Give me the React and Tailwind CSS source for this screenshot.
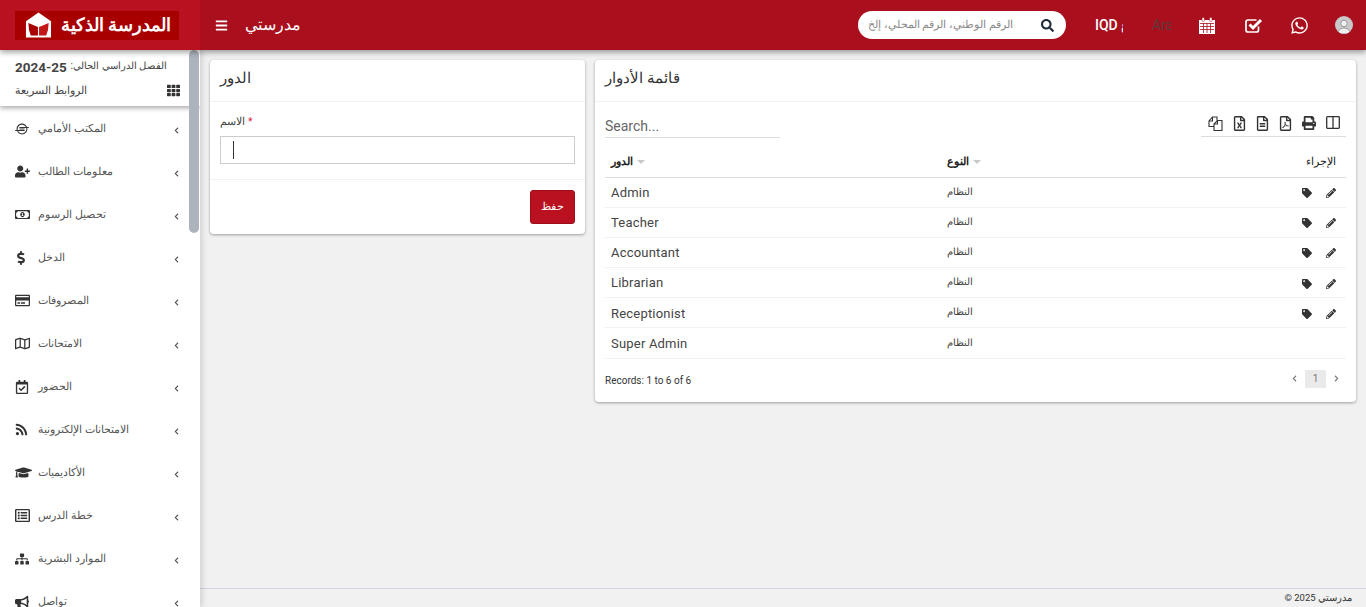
import React from 'react';
import {
  FaBars, FaSearch, FaWhatsapp, FaTh, FaChevronLeft, FaChevronRight,
  FaIoxhost, FaUserPlus, FaRegMoneyBillAlt, FaDollarSign, FaRegCreditCard, FaRegMap, FaRegCalendarCheck,
  FaRss, FaGraduationCap, FaRegListAlt, FaSitemap, FaBullhorn, FaTag, FaPencilAlt,
  FaRegFileExcel, FaRegFileAlt, FaRegFilePdf, FaPrint,
} from 'react-icons/fa';

const menu = [
  ['المكتب الأمامي', FaIoxhost, 'text-[14px]'],
  ['معلومات الطالب', FaUserPlus, 'text-[15px]'],
  ['تحصيل الرسوم', FaRegMoneyBillAlt, 'text-[15px]'],
  ['الدخل', FaDollarSign, 'text-[14px] -ml-[1px]'],
  ['المصروفات', FaRegCreditCard, 'text-[15px]'],
  ['الامتحانات', FaRegMap, 'text-[15px]'],
  ['الحضور', FaRegCalendarCheck, 'text-[14px]'],
  ['الامتحانات الإلكترونية', FaRss, 'text-[13px]'],
  ['الأكاديميات', FaGraduationCap, 'text-[17px]'],
  ['خطة الدرس', FaRegListAlt, 'text-[15px]'],
  ['الموارد البشرية', FaSitemap, 'text-[14px]'],
  ['تواصل', FaBullhorn, 'text-[14px]'],
];

const roles = [
  ['Admin', true],
  ['Teacher', true],
  ['Accountant', true],
  ['Librarian', true],
  ['Receptionist', true],
  ['Super Admin', false],
];

const SortCaret = () => (
  <span className="inline-block w-0 h-0 border-x-[4px] border-x-transparent border-t-[4px] border-t-[#c9c9c9] ml-1 align-middle" />
);

const Logo = () => (
  <svg width="27" height="28" viewBox="0 0 28 28" className="shrink-0">
    <path d="M14 1 L27 10 V27 H1 V10 Z" fill="#fff" />
    <path d="M3.5 12 L13.4 16 V25 L6 25 Q3.5 19 3.5 12 Z" fill="#a80000" />
    <path d="M24.5 12 L14.6 16 V25 L22 25 Q24.5 19 24.5 12 Z" fill="#c21818" />
  </svg>
);

const CalendarIcon = () => (
  <svg width="16" height="17" viewBox="0 0 16 17" className="shrink-0">
    <path d="M0 3h16v14H0z" fill="#fff" />
    <rect x="3" y="0.5" width="2.4" height="4" rx="1" fill="#fff" stroke="#a90f1c" strokeWidth="0.5" />
    <rect x="10.6" y="0.5" width="2.4" height="4" rx="1" fill="#fff" stroke="#a90f1c" strokeWidth="0.5" />
    <path d="M1 6.5h14M1 9.5h14M1 12.5h14M4.5 6v10M8 6v10M11.5 6v10" stroke="#a90f1c" strokeWidth="0.8" />
  </svg>
);

const CheckIcon = () => (
  <svg width="18" height="15" viewBox="0 0 18 15" className="shrink-0">
    <path d="M13.5 8.5V12a2 2 0 0 1-2 2H3a2 2 0 0 1-2-2V4a2 2 0 0 1 2-2h8.5" fill="none" stroke="#fff" strokeWidth="1.7" />
    <path d="M4.5 6.5L8 10L16 2" fill="none" stroke="#fff" strokeWidth="3" />
  </svg>
);

const CopyIcon = () => (
  <svg width="15" height="15" viewBox="0 0 15 15" className="shrink-0" fill="none" stroke="#333" strokeWidth="1.1">
    <path d="M6 10.5H1V5l3.5-4H9v3.5" fill="#fff" />
    <path d="M1 5h3.5V1" />
    <path d="M6 14.5V8l3.5-3.5H14v10z" fill="#fff" />
    <path d="M6 8h3.5V4.5" />
  </svg>
);

const ColumnsIcon = () => (
  <svg width="14" height="13" viewBox="0 0 14 13" className="shrink-0" fill="none" stroke="#333" strokeWidth="1.3">
    <rect x="0.7" y="0.7" width="12.6" height="11.6" rx="0.8" />
    <path d="M7 1v11" />
  </svg>
);

const Avatar = () => (
  <div className="w-[18px] h-[18px] rounded-full bg-[#c9c9c9] overflow-hidden flex items-end justify-center">
    <svg width="14" height="16" viewBox="0 0 14 16">
      <circle cx="7" cy="5.5" r="3.2" fill="#f1f1f1" stroke="#8a8a8a" strokeWidth="0.8" />
      <path d="M1 16 Q1 10 7 10 Q13 10 13 16 Z" fill="#f1f1f1" stroke="#8a8a8a" strokeWidth="0.8" />
    </svg>
  </div>
);

const Header = () => (
  <header className="h-[50px] flex bg-[#a90f1c] shadow-[0_2px_6px_rgba(0,0,0,0.4)] relative z-20 shrink-0">
    <div className="w-[200px] bg-[#b91120] flex items-center pl-[15px]">
      <div className="w-[164px] h-[29px] bg-[#a80000] flex items-center justify-between pl-[10px] pr-2">
        <Logo />
        <span dir="rtl" className="text-white font-bold text-[17.5px] whitespace-nowrap">المدرسة الذكية</span>
      </div>
    </div>
    <div className="flex-1 flex items-center pl-[15px]">
      <FaBars className="text-white text-[13px]" />
      <span dir="rtl" className="text-white text-[16px] font-medium ml-[17px]">مدرستي</span>
      <div className="ml-auto w-[208px] h-[28px] bg-white rounded-full flex items-center pl-[10px]">
        <div className="w-[148px] overflow-hidden text-[11px] text-[#8a8a8a] whitespace-nowrap">
          <span dir="rtl" className="inline-block">بحث باسم الطالب، رقم التلفون، الرقم الوطني، الرقم المحلي، إلخ</span>
        </div>
        <FaSearch className="text-[#1f2937] text-[13px] ml-[25px]" />
      </div>
      <div className="w-[28px] ml-[29px] overflow-hidden whitespace-nowrap text-white text-[14px] font-medium">IQD د.ع</div>
      <div className="w-[19px] ml-[29px] overflow-hidden whitespace-nowrap text-[#5a3a3a] text-[14px]">Arabic</div>
      <div className="ml-[28px]"><CalendarIcon /></div>
      <div className="ml-[30px]"><CheckIcon /></div>
      <FaWhatsapp className="text-white text-[19px] ml-[27px]" />
      <div className="ml-[26px] mr-[13px]"><Avatar /></div>
    </div>
  </header>
);

const Sidebar = () => (
  <aside className="w-[200px] bg-white relative overflow-hidden shrink-0 shadow-[2px_0_6px_rgba(0,0,0,0.15)] z-10">
    <div className="h-[56px] relative z-10 shadow-[0_2px_5px_rgba(0,0,0,0.35)] bg-white pl-[15px] pr-[20px] pt-[8px] text-[#444]">
      <div className="leading-[18px] whitespace-nowrap flex justify-between items-center">
        <b className="text-[13.5px] text-[#444]">2024-25</b>
        <span dir="rtl" className="text-[10px] mr-[13px] -translate-y-px">الفصل الدراسي الحالي:</span>
      </div>
      <div className="flex items-center justify-between mt-[7px]">
        <span dir="rtl" className="text-[10.5px]">الروابط السريعة</span>
        <FaTh className="text-[#333] text-[13px]" />
      </div>
    </div>
    <nav>
      {menu.map(([label, Icon, size]) => (
        <div key={label} className="h-[43px] flex items-center pl-[15px] text-[#555] whitespace-nowrap">
          <span className="w-[23px] flex justify-start translate-y-px"><Icon className={`text-[#333] ${size}`} /></span>
          <span dir="rtl" className="text-[10.5px] translate-y-[1px]">{label}</span>
          <FaChevronLeft className="ml-auto mr-[20px] text-[#555] text-[7px] mt-[6px]" />
        </div>
      ))}
    </nav>
    <div className="absolute top-0 right-px w-[10px] h-[183px] rounded-md bg-[#adb3bd] z-20" />
  </aside>
);

const CardTitle = ({ children }) => (
  <div className="h-[42px] border-b border-[#f2f2f2] flex items-center px-[10px]">
    <h3 dir="rtl" className="text-[14.5px] text-[#333] font-normal -translate-y-0.5">{children}</h3>
  </div>
);

const RoleForm = () => (
  <section className="w-[375px] h-[174px] bg-white rounded shadow-[0_1px_3px_rgba(0,0,0,0.35)] shrink-0">
    <CardTitle>الدور</CardTitle>
    <div className="h-[78px] border-b border-[#f2f2f2] px-[10px] pt-[11px]">
      <label className="flex items-center gap-[3px] text-[10.5px] text-[#444] h-[16px] translate-y-px">
        <span dir="rtl">الاسم</span>
        <span className="text-[#e11d48]">*</span>
      </label>
      <div className="mt-[7px] h-[28px] border border-[#ccc] flex items-center pl-[12px]">
        <div className="w-px h-[18px] bg-[#333]" />
      </div>
    </div>
    <div className="flex justify-end px-[10px] pt-[10px]">
      <button dir="rtl" className="w-[45px] h-[34px] bg-[#b91120] border border-[#a00d1a] rounded-[3px] text-white text-[11px]">حفظ</button>
    </div>
  </section>
);

const RoleList = () => (
  <section className="flex-1 h-[342px] bg-white rounded shadow-[0_1px_3px_rgba(0,0,0,0.35)]">
    <CardTitle>قائمة الأدوار</CardTitle>
    <div className="px-[10px]">
      <div className="flex justify-between h-[36px] pt-[14px]">
        <div className="w-[175px] h-[22px] border-b border-[#ddd] text-[14px] text-[#666] leading-[20px]">Search...</div>
        <div className="w-[145px] h-[22px] border-b border-[#ddd] flex items-start justify-end gap-[10px] pr-[6px] text-[#333] pt-[1px] -mt-[1px]">
          <CopyIcon />
          <FaRegFileExcel className="text-[15px] -mx-px" />
          <FaRegFileAlt className="text-[15px] -mx-px" />
          <FaRegFilePdf className="text-[15px] -mx-px" />
          <FaPrint className="text-[14px]" />
          <ColumnsIcon />
        </div>
      </div>
      <table className="w-full table-fixed mt-[10px]">
        <thead>
          <tr className="h-[29px] border-b border-[#ddd] text-[11px] text-[#222]">
            <th className="w-[342px] text-left font-bold pl-[6px]"><span dir="rtl">الدور</span><SortCaret /></th>
            <th className="text-left font-bold"><span dir="rtl">النوع</span><SortCaret /></th>
            <th className="w-[120px] text-right font-normal pr-[10px]"><span dir="rtl">الإجراء</span></th>
          </tr>
        </thead>
        <tbody>
          {roles.map(([name, editable]) => (
            <tr key={name} className="h-[30.2px] border-b border-[#f2f2f2]">
              <td className="pl-[6px] pt-px text-[13px] text-[#444] tracking-[0.2px]">{name}</td>
              <td className="text-[10px] text-[#444]"><span dir="rtl" className="inline-block -translate-y-px">النظام</span></td>
              <td className="pr-[10px]">
                {editable && (
                  <div className="flex justify-end gap-[14px] text-[#333] text-[10px] translate-y-px">
                    <FaTag />
                    <FaPencilAlt />
                  </div>
                )}
              </td>
            </tr>
          ))}
        </tbody>
      </table>
      <div className="flex items-center justify-between mt-[11px] h-[18px]">
        <span className="text-[10px] text-[#333] translate-y-0.5">Records: 1 to 6 of 6</span>
        <div className="flex items-center text-[#777] pr-[6px]">
          <FaChevronLeft className="text-[7px]" />
          <span className="w-[21px] h-[18px] bg-[#eaeaea] text-[10px] ml-[7px] mr-[7px] flex items-center justify-center">1</span>
          <FaChevronRight className="text-[7px]" />
        </div>
      </div>
    </div>
  </section>
);

export default function App() {
  return (
    <div className="h-[607px] overflow-hidden flex flex-col bg-[#f1f1f1] font-['Roboto','Liberation_Sans',sans-serif]">
      <Header />
      <div className="flex-1 flex min-h-0">
        <Sidebar />
        <div className="flex-1 flex flex-col min-w-0">
          <main className="flex-1 flex items-start gap-[10px] p-[10px]">
            <RoleForm />
            <RoleList />
          </main>
          <footer className="h-[19px] border-t border-[#d2d6de] bg-[#f1f1f1] flex items-center justify-end pr-[14px] text-[9.5px] text-[#333]">
            <span dir="rtl">مدرستي 2025 ©</span>
          </footer>
        </div>
      </div>
    </div>
  );
}
